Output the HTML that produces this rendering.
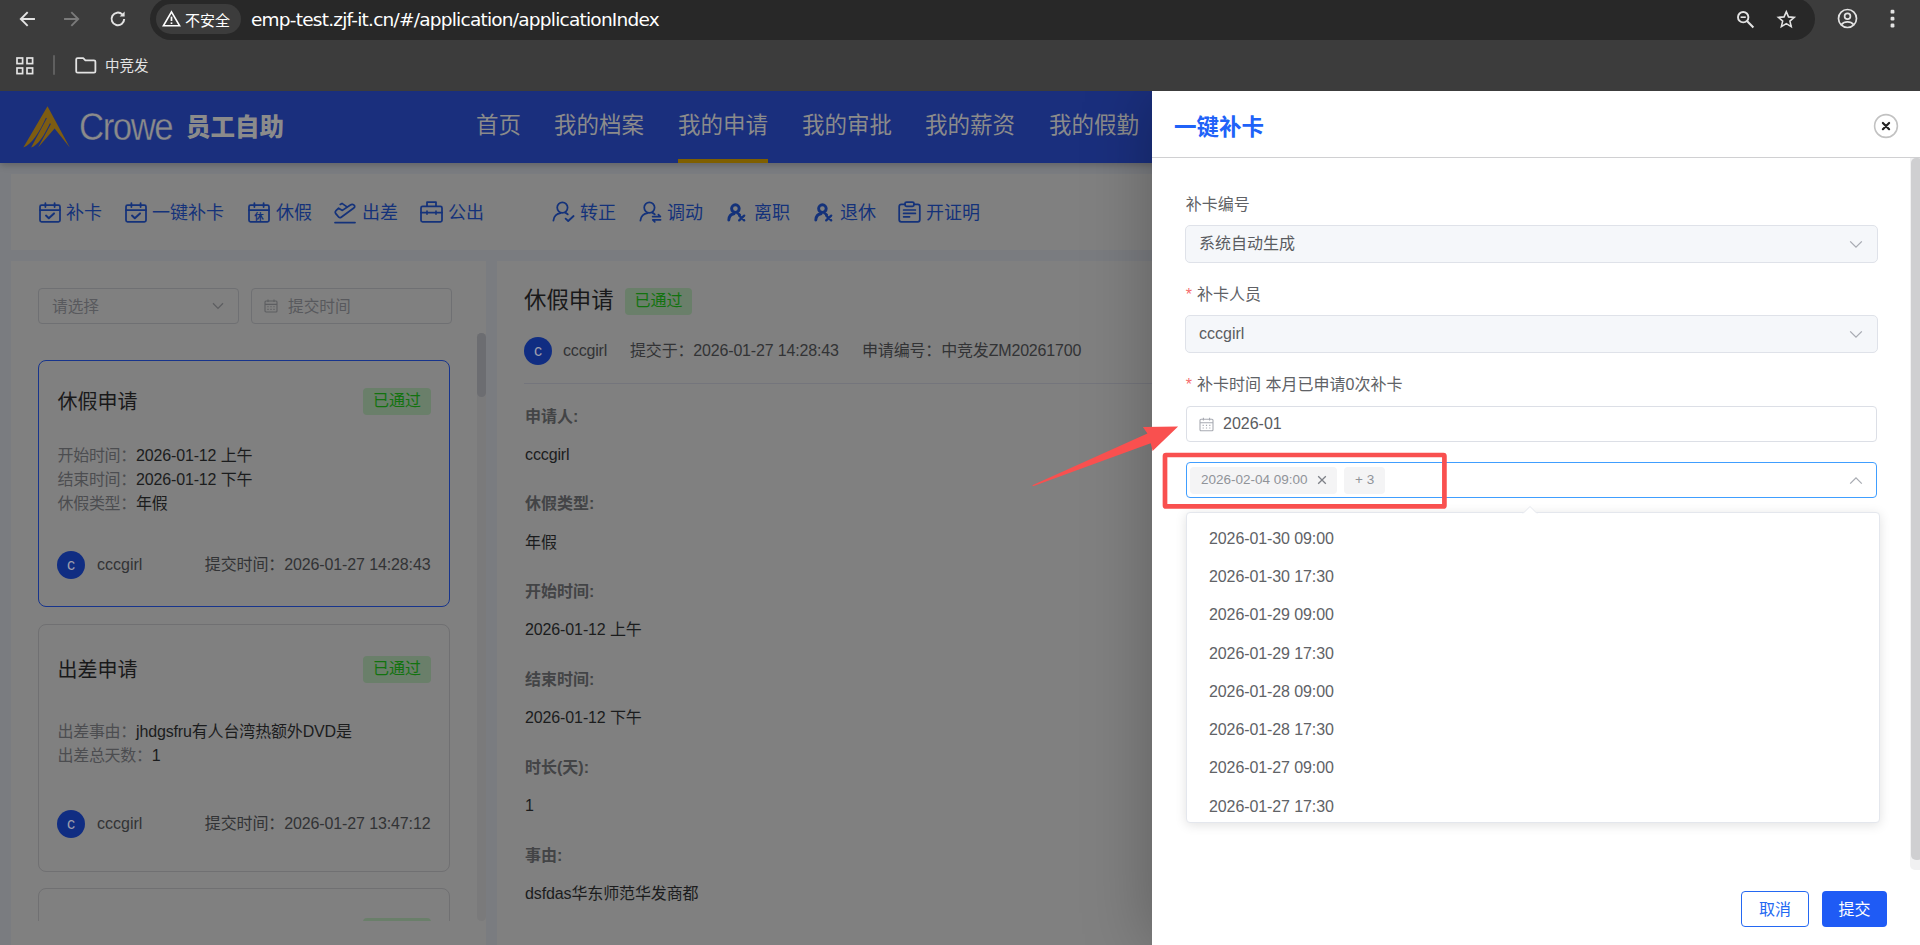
<!DOCTYPE html>
<html lang="zh-CN">
<head>
<meta charset="utf-8">
<title>员工自助</title>
<style>
*{box-sizing:border-box;margin:0;padding:0}
html,body{width:1920px;height:945px;overflow:hidden;background:#fff}
body{font-family:"Liberation Sans","Noto Sans CJK SC",sans-serif;position:relative;color:#303133}
.abs{position:absolute}
/* ---------- browser chrome ---------- */
#chrome{position:absolute;left:0;top:0;width:1920px;height:91px;background:#3c3c3c;z-index:50}
#pill{position:absolute;left:150px;top:-2px;width:1665px;height:42px;border-radius:21px;background:#282828}
#chip{position:absolute;left:156px;top:4px;width:85px;height:30px;border-radius:15px;background:#3c3c3c}
#chip span{position:absolute;left:29px;top:6px;font-size:15px;color:#fff;line-height:22px;white-space:nowrap}
#url{position:absolute;left:251px;top:7px;font-size:18.5px;line-height:26px;color:#fff;white-space:nowrap;font-family:"DejaVu Sans","Liberation Sans",sans-serif;letter-spacing:-0.77px}
#bm{position:absolute;left:105px;top:55px;font-size:14.5px;line-height:22px;color:#e3e3e3;white-space:nowrap}
#chrome svg{position:absolute;overflow:visible}
/* ---------- app page (under mask) ---------- */
#app{position:absolute;left:0;top:91px;width:1920px;height:854px;background:#7a7c80;overflow:hidden}
#hdr{position:absolute;left:0;top:0;width:1920px;height:72px;background:#1a2f7d;box-shadow:0 2px 7px rgba(0,0,0,.22);z-index:2}

#hdr .nav{position:absolute;top:19px;font-size:22.5px;line-height:32px;color:#8b8b8b;white-space:nowrap;letter-spacing:0}
#hdr .ul{position:absolute;left:678px;top:68px;width:90px;height:4px;background:#7f5f00}
#crowe{position:absolute;left:79px;top:13.2px;font-size:38px;line-height:46px;color:#8b8b8b;letter-spacing:-1.6px;transform:scaleX(.915);transform-origin:0 0;font-weight:400;white-space:nowrap;-webkit-text-stroke:0.35px #1a2f7d}
#ygzz{position:absolute;left:186px;top:20px;font-size:24.5px;line-height:34px;color:#8b8b8b;font-weight:900;white-space:nowrap}
#tb{position:absolute;left:11px;top:82.6px;width:1200px;height:76.4px;background:#808080}
.ti{position:absolute;top:109px;font-size:18px;line-height:26px;color:#14327a;white-space:nowrap}
.tic{position:absolute;top:109px;overflow:visible}
#lp{position:absolute;left:11px;top:170px;width:475px;height:700px;background:#808080}
#rp{position:absolute;left:497px;top:170px;width:800px;height:700px;background:#808080}
.inp{position:absolute;top:197px;height:36px;width:201px;border:1px solid #6f7073;border-radius:4px}
.inp span{position:absolute;top:7px;font-size:15.7px;line-height:22px;color:#58595d;white-space:nowrap}
.card{position:absolute;left:38px;width:412px;height:247px;border:1px solid #707072;border-radius:8px}
.card.on{border-color:#17348c}
.card h3{position:absolute;left:18.5px;top:25px;font-size:20px;line-height:30px;font-weight:400;color:#19191a;white-space:nowrap}
.tag{position:absolute;height:27px;width:68px;border-radius:4px;background:#6a7f6a;color:#12730f;font-size:16px;line-height:26px;text-align:center;white-space:nowrap}
.card .r{position:absolute;left:18.5px;font-size:16px;line-height:24px;color:#1b1c1d;white-space:nowrap;letter-spacing:-0.15px}
.card .r i{font-style:normal;color:#4c4d50;letter-spacing:-0.3px}
.av{position:absolute;width:28px;height:28px;border-radius:50%;background:#102d82;color:#9c9cac;font-size:16px;line-height:27px;text-align:center}
.card .nm{position:absolute;left:58px;top:192px;font-size:16px;line-height:24px;color:#323335;white-space:nowrap}
.card .tm{position:absolute;right:18.5px;top:192px;font-size:16px;line-height:24px;color:#323335;white-space:nowrap;letter-spacing:-0.12px}
.dl{position:absolute;left:525px;font-size:16px;line-height:24px;font-weight:700;color:#434446;white-space:nowrap}
.dv{position:absolute;left:525px;font-size:16px;line-height:24px;color:#1b1c1d;white-space:nowrap;letter-spacing:-0.12px}
.meta{position:absolute;top:248px;font-size:16px;line-height:24px;color:#323335;white-space:nowrap;letter-spacing:-0.17px}
/* ---------- drawer ---------- */
#drawer{position:absolute;left:1152px;top:91px;width:768px;height:854px;background:#fff;z-index:20;box-shadow:0 0 64px rgba(0,0,0,.27)}

#drawer .ttl{position:absolute;left:22px;top:20.5px;font-size:22.5px;line-height:32px;font-weight:700;color:#2062f8;white-space:nowrap}
#drawer .hr{position:absolute;left:0;top:66px;width:768px;height:1px;background:#d0d0d2}
.fl{position:absolute;left:33.8px;margin-top:.6px;font-size:16px;line-height:24px;color:#606266;white-space:nowrap}
.fl b{font-weight:400;color:#f56c6c;margin-right:5px}
.sel{position:absolute;left:33px;width:693px;height:38px;border:1px solid #dfe2e9;border-radius:5px;background:#f5f7fa}
.sel span{position:absolute;left:13px;top:6px;font-size:16px;line-height:24px;color:#5a5c61;white-space:nowrap}
.sel svg{position:absolute;left:663px;top:14px}
.opt{position:absolute;left:57px;font-size:16px;line-height:24px;color:#606266;white-space:nowrap;letter-spacing:-0.1px}
.tg{position:absolute;top:4px;height:27px;border-radius:4px;background:#f4f4f5;color:#909399;font-size:13.5px;line-height:26.5px;white-space:nowrap;padding-left:11px}
.btn{position:absolute;top:800px;height:36px;border-radius:4px;font-size:16px;line-height:35.6px;text-align:center;white-space:nowrap}
</style>
</head>
<body>
<div id="chrome">
  <div id="pill"></div>
  <div id="chip"><span>不安全</span></div>
  <div id="url">emp-test.zjf-it.cn/#/application/applicationIndex</div>
  <div id="bm">中竞发</div>

  <!-- back -->
  <svg style="left:19px;top:11px" width="16" height="16" viewBox="0 0 16 16" fill="none" stroke="#e3e3e3" stroke-width="1.9" stroke-linecap="square" stroke-linejoin="miter"><path d="M15 8H2.5M8 1.8L1.8 8L8 14.2"/></svg>
  <!-- forward -->
  <svg style="left:64px;top:11px" width="16" height="16" viewBox="0 0 16 16" fill="none" stroke="#7a7a7a" stroke-width="1.9" stroke-linecap="square"><path d="M1 8H13.5M8 1.8L14.2 8L8 14.2"/></svg>
  <!-- reload -->
  <svg style="left:109px;top:10px" width="18" height="18" viewBox="0 0 18 18" fill="none" stroke="#e3e3e3" stroke-width="2"><path d="M15.2 9A6.3 6.3 0 1 1 13.3 4.4"/><path d="M15.6 1.6V6.6H10.6Z" fill="#e3e3e3" stroke="none"/></svg>
  <!-- warning -->
  <svg style="left:162px;top:10px" width="19" height="17" viewBox="0 0 19 17" fill="none" stroke="#fff" stroke-width="1.6" stroke-linejoin="miter"><path d="M9.5 1.8L17.6 15.8H1.4Z"/><path d="M9.5 6.6V11" stroke-width="1.7"/><path d="M9.5 12.4V14" stroke-width="1.7"/></svg>
  <!-- zoom -->
  <svg style="left:1736px;top:10px" width="19" height="19" viewBox="0 0 19 19" fill="none" stroke="#e3e3e3" stroke-width="1.9"><circle cx="7.2" cy="7.2" r="5.2"/><path d="M11 11L17.4 17.4" stroke-width="2.1"/><path d="M4.6 7.2H9.8" stroke-width="1.6"/></svg>
  <!-- star -->
  <svg style="left:1776.5px;top:9.7px" width="18.6" height="18.6" viewBox="0 0 20 20" fill="none" stroke="#e3e3e3" stroke-width="1.7" stroke-linejoin="miter"><path d="M10 1.8L12.4 7.4L18.5 7.9L13.9 11.9L15.3 17.9L10 14.7L4.7 17.9L6.1 11.9L1.5 7.9L7.6 7.4Z"/></svg>
  <!-- profile -->
  <svg style="left:1837px;top:8px" width="21" height="21" viewBox="0 0 21 21" fill="none" stroke="#e3e3e3" stroke-width="1.7"><circle cx="10.5" cy="10.5" r="9"/><circle cx="10.5" cy="8.3" r="2.9"/><path d="M4.4 16.6C6 14.6 8 13.8 10.5 13.8S15 14.6 16.6 16.6"/></svg>
  <!-- menu -->
  <svg style="left:1890px;top:9px" width="5" height="20" viewBox="0 0 5 20" fill="#e3e3e3"><rect x=".6" y=".8" width="3.8" height="3.8" rx="1.2"/><rect x=".6" y="7.7" width="3.8" height="3.8" rx="1.2"/><rect x=".6" y="14.6" width="3.8" height="3.8" rx="1.2"/></svg>
  <!-- apps grid -->
  <svg style="left:16px;top:57px" width="18" height="18" viewBox="0 0 18 18" fill="none" stroke="#e3e3e3" stroke-width="1.7"><rect x="1" y="1" width="5.6" height="5.6"/><rect x="11" y="1" width="5.6" height="5.6"/><rect x="1" y="11" width="5.6" height="5.6"/><rect x="11" y="11" width="5.6" height="5.6"/></svg>
  <div style="position:absolute;left:53px;top:55px;width:2px;height:20px;background:#5f5f5f;border-radius:1px"></div>
  <!-- folder -->
  <svg style="left:75px;top:57px" width="22" height="17" viewBox="0 0 22 17" fill="none" stroke="#e3e3e3" stroke-width="1.8" stroke-linejoin="round"><path d="M1.2 2.6A1.4 1.4 0 0 1 2.6 1.2H8.2L10.4 3.4H19A1.4 1.4 0 0 1 20.4 4.8V14.2A1.4 1.4 0 0 1 19 15.6H2.6A1.4 1.4 0 0 1 1.2 14.2Z"/></svg>
</div>
<div id="app">
  <div id="hdr">
    <svg style="position:absolute;left:22px;top:13px" width="50" height="46" viewBox="0 0 50 46"><path d="M25.5 2.2L47.8 43.6L32.6 24.4L16.1 43.6L28.9 19.9L27.9 19.2C22 32 16 41 9.1 43.6L24.9 14.2L23.9 13.7C17.5 28 10 40 1.3 43.6Z" fill="#7d5c12"/></svg>
    <div id="crowe">Crowe</div>
    <div id="ygzz">员工自助</div>
    <div class="nav" style="left:476px">首页</div>
    <div class="nav" style="left:554px">我的档案</div>
    <div class="nav" style="left:678px">我的申请</div>
    <div class="nav" style="left:802px">我的审批</div>
    <div class="nav" style="left:925px">我的薪资</div>
    <div class="nav" style="left:1049px">我的假勤</div>
    <div class="ul"></div>
  </div>
  <div id="tb"></div>
  <div class="ti" style="left:66px">补卡</div>
  <div class="ti" style="left:152px">一键补卡</div>
  <div class="ti" style="left:276px">休假</div>
  <div class="ti" style="left:362px">出差</div>
  <div class="ti" style="left:448px">公出</div>
  <div class="ti" style="left:580px">转正</div>
  <div class="ti" style="left:667px">调动</div>
  <div class="ti" style="left:754px">离职</div>
  <div class="ti" style="left:840px">退休</div>
  <div class="ti" style="left:926px">开证明</div>
  <svg class="tic" style="left:38.5px;top:111px" width="22" height="21" viewBox="0 0 22 21" fill="none" stroke="#14327a" stroke-width="1.75" stroke-linecap="round" stroke-linejoin="round"><rect x="1" y="3.2" width="20" height="16.6" rx="1.6"/><path d="M1 8.2H21M6.4 1V5M15.6 1V5"/><path d="M7 13.6L9.8 16.2L15 11.4" stroke-width="2"/></svg>
  <svg class="tic" style="left:124.5px;top:111px" width="22" height="21" viewBox="0 0 22 21" fill="none" stroke="#14327a" stroke-width="1.75" stroke-linecap="round" stroke-linejoin="round"><rect x="1" y="3.2" width="20" height="16.6" rx="1.6"/><path d="M1 8.2H21M6.4 1V5M15.6 1V5"/><path d="M7 13.6L9.8 16.2L15 11.4" stroke-width="2"/></svg>
  <svg class="tic" style="left:247.5px;top:111px" width="22" height="21" viewBox="0 0 22 21" fill="none" stroke="#14327a" stroke-width="1.75" stroke-linecap="round" stroke-linejoin="round"><rect x="1" y="3.2" width="20" height="16.6" rx="1.6"/><path d="M1 8.2H21M6.4 1V5M15.6 1V5"/><text x="11" y="17.6" font-size="9.5" font-weight="700" text-anchor="middle" fill="#14327a" stroke="none" font-family="Liberation Sans,Noto Sans CJK SC,sans-serif">休</text></svg>
  <svg class="tic" style="left:334px;top:110.5px" width="22" height="22" viewBox="0 0 22 22" fill="none" stroke="#14327a" stroke-width="1.75" stroke-linecap="round" stroke-linejoin="round"><path d="M1 20.6H21"/><path d="M2 8.6L4.6 6.2L8.4 8.4L16 3.2C17.6 2.2 19.6 2.4 20.6 3.8C21 4.6 20.6 5.4 19.8 6L7.2 15.2C6.4 15.8 5.4 15.8 4.8 15.2L1.6 11.4C1 10.6 1.2 9.4 2 8.6Z"/><path d="M6.2 2.4L8 1.4L12.6 4.6"/></svg>
  <svg class="tic" style="left:420px;top:110px" width="23" height="22" viewBox="0 0 23 22" fill="none" stroke="#14327a" stroke-width="1.75" stroke-linecap="round" stroke-linejoin="round"><rect x="1" y="5.4" width="21" height="15.4" rx="1.6"/><path d="M7 5.2V1.2H16V5.2"/><path d="M1 11.6H22"/><path d="M7 10V13.2M16 10V13.2" stroke-width="1.6"/></svg>
  <svg class="tic" style="left:551.5px;top:110px" width="23" height="22" viewBox="0 0 23 22" fill="none" stroke="#14327a" stroke-width="1.75" stroke-linecap="round" stroke-linejoin="round"><circle cx="10.4" cy="6.6" r="5.2"/><path d="M1.4 19.6C2 15.4 5 12.6 8.6 12.2"/><path d="M13.2 11.6C14.2 12 15 12.6 15.8 13.4"/><path d="M13.6 17.6L16.2 20L21.6 15" stroke-width="1.8"/></svg>
  <svg class="tic" style="left:638.5px;top:110px" width="23" height="22" viewBox="0 0 23 22" fill="none" stroke="#14327a" stroke-width="1.75" stroke-linecap="round" stroke-linejoin="round"><circle cx="10.4" cy="6.6" r="5.2"/><path d="M1.4 19.6C2 15.4 5 12.6 8.6 12.2"/><path d="M13.2 11.6C14.2 12 15 12.6 15.8 13.4"/><path d="M13.6 15.6H21.4L19.4 13.6M21.6 18.8H13.8L15.8 20.8" stroke-width="1.7"/></svg>
  <svg class="tic" style="left:727px;top:112px" width="19" height="19" viewBox="0 0 19 19" fill="none" stroke="#14327a" stroke-width="2.9" stroke-linecap="round" stroke-linejoin="round"><circle cx="8.4" cy="5.6" r="3.8"/><path d="M1.8 17C2 13.6 4.2 11.2 7 10.8"/><path d="M10.6 10.4C11.6 10.8 12.2 11.2 12.8 11.8" stroke-width="2.4"/><path d="M12.2 12.6L17.2 17.4M17.2 12.6L12.2 17.4" stroke-width="2.3"/></svg>
  <svg class="tic" style="left:814px;top:112px" width="19" height="19" viewBox="0 0 19 19" fill="none" stroke="#14327a" stroke-width="2.9" stroke-linecap="round" stroke-linejoin="round"><circle cx="8.4" cy="5.6" r="3.8"/><path d="M1.8 17C2 13.6 4.2 11.2 7 10.8"/><path d="M10.6 10.4C11.6 10.8 12.2 11.2 12.8 11.8" stroke-width="2.4"/><path d="M12.2 12.6L17.2 17.4M17.2 12.6L12.2 17.4" stroke-width="2.3"/></svg>
  <svg class="tic" style="left:898px;top:110px" width="23" height="22" viewBox="0 0 23 22" fill="none" stroke="#14327a" stroke-width="1.75" stroke-linecap="round" stroke-linejoin="round"><path d="M7 3.4H3.2A2 2 0 0 0 1.2 5.4V18.8A2 2 0 0 0 3.2 20.8H19.8A2 2 0 0 0 21.8 18.8V5.4A2 2 0 0 0 19.8 3.4H16"/><rect x="7" y="1" width="9" height="4.4" rx="1.6"/><path d="M5.6 9H17.4M5.6 12.4H17.4M5.6 15.8H11.6" stroke-width="1.7"/></svg>
  <div id="lp"></div>
  <div id="rp"></div>
  <div class="inp" style="left:38px"><span style="left:13px">请选择</span>
    <svg style="position:absolute;left:173px;top:13px" width="12" height="8" viewBox="0 0 12 8" fill="none" stroke="#5d5e61" stroke-width="1.3"><path d="M1 1.2L6 6.4L11 1.2"/></svg></div>
  <div class="inp" style="left:251px"><span style="left:36px">提交时间</span>
    <svg style="position:absolute;left:12px;top:10px" width="14" height="14" viewBox="0 0 14 14" fill="none" stroke="#5d5e61" stroke-width="1.1"><rect x="1" y="2" width="12" height="11" rx="1"/><path d="M1 5.4H13M4 .6V3M10 .6V3"/><path d="M3.4 7.8H4.6M6.4 7.8H7.6M9.4 7.8H10.6M3.4 10.4H4.6M6.4 10.4H7.6M9.4 10.4H10.6"/></svg></div>
  <div style="position:absolute;left:477px;top:242px;width:9px;height:588px;background:#7a7a7b;border-radius:4.5px"></div>
  <div style="position:absolute;left:477px;top:242px;width:9px;height:64px;background:#6c6d71;border-radius:4.5px"></div>
  <div id="list" style="position:absolute;left:0;top:260px;width:476px;height:569.5px;overflow:hidden">
  <div class="card on" style="top:9px">
    <h3 style="top:26px">休假申请</h3><div class="tag" style="left:324px;top:27px">已通过</div>
    <div class="r" style="top:83px"><i>开始时间：</i>2026-01-12 上午</div>
    <div class="r" style="top:107px"><i>结束时间：</i>2026-01-12 下午</div>
    <div class="r" style="top:131px"><i>休假类型：</i>年假</div>
    <div class="av" style="left:18px;top:190px">c</div><div class="nm">cccgirl</div><div class="tm">提交时间：2026-01-27 14:28:43</div>
  </div>
  <div class="card" style="top:272.5px;height:248px">
    <h3 style="top:30px">出差申请</h3><div class="tag" style="left:324px;top:31.5px">已通过</div>
    <div class="r" style="top:95px"><i>出差事由：</i>jhdgsfru有人台湾热额外DVD是</div>
    <div class="r" style="top:119px"><i>出差总天数：</i>1</div>
    <div class="av" style="left:18px;top:185.5px">c</div><div class="nm" style="top:187.5px">cccgirl</div><div class="tm" style="top:187.5px">提交时间：2026-01-27 13:47:12</div>
  </div>
  <div class="card" style="top:536.5px">
    <h3 style="top:28.5px">休假申请</h3><div class="tag" style="left:324px;top:29px">已通过</div>
  </div>
  </div>
  <div style="position:absolute;left:524px;top:193.8px;font-size:22.4px;line-height:32px;color:#19191a;white-space:nowrap">休假申请</div>
  <div class="tag" style="left:625px;top:197px;width:67px;height:26.5px">已通过</div>
  <div class="av" style="left:524px;top:246px">c</div>
  <div class="meta" style="left:563px">cccgirl</div>
  <div class="meta" style="left:630px">提交于：2026-01-27 14:28:43</div>
  <div class="meta" style="left:862px">申请编号：中竞发ZM20261700</div>
  <div style="position:absolute;left:524px;top:292px;width:700px;height:1px;background:#74757c"></div>
  <div class="dl" style="top:314.2px">申请人:</div><div class="dv" style="top:352.2px">cccgirl</div>
  <div class="dl" style="top:401.2px">休假类型:</div><div class="dv" style="top:440.2px">年假</div>
  <div class="dl" style="top:489.2px">开始时间:</div><div class="dv" style="top:527.2px">2026-01-12 上午</div>
  <div class="dl" style="top:577.2px">结束时间:</div><div class="dv" style="top:615.2px">2026-01-12 下午</div>
  <div class="dl" style="top:665.2px">时长(天):</div><div class="dv" style="top:703.2px">1</div>
  <div class="dl" style="top:753.2px">事由:</div><div class="dv" style="top:791.2px">dsfdas华东师范华发商都</div>
</div>
<div id="drawer">
  <div class="ttl">一键补卡</div>
  <svg style="position:absolute;left:721px;top:22px" width="26" height="26" viewBox="0 0 26 26" fill="none"><circle cx="13" cy="13" r="11.4" stroke="#c2c2c2" stroke-width="1.6"/><path d="M9.9 10L16.1 16.2M16.1 10L9.9 16.2" stroke="#222" stroke-width="2.2" stroke-linecap="round"/></svg>
  <div class="hr"></div>
  <div style="position:absolute;left:758px;top:67px;width:14px;height:712px;background:#f1f1f2;border-radius:0 0 5px 5px"></div>
  <div style="position:absolute;left:759px;top:67px;width:12px;height:702px;background:#cfcfd1;border-radius:5px"></div>
  <div class="fl" style="top:101px">补卡编号</div>
  <div class="sel" style="top:134px"><span>系统自动生成</span><svg width="14" height="9" viewBox="0 0 14 9" fill="none" stroke="#a8abb2" stroke-width="1.3"><path d="M1.2 1.4L7 7.2L12.8 1.4"/></svg></div>
  <div class="fl" style="top:191px"><b>*</b>补卡人员</div>
  <div class="sel" style="top:224px"><span>cccgirl</span><svg width="14" height="9" viewBox="0 0 14 9" fill="none" stroke="#a8abb2" stroke-width="1.3"><path d="M1.2 1.4L7 7.2L12.8 1.4"/></svg></div>
  <div class="fl" style="top:281px"><b>*</b>补卡时间 本月已申请0次补卡</div>
  <div style="position:absolute;left:34px;top:315px;width:691px;height:36px;border:1px solid #dcdfe6;border-radius:4px;background:#fff">
    <svg style="position:absolute;left:12px;top:10px" width="15" height="15" viewBox="0 0 15 15" fill="none" stroke="#a8abb2" stroke-width="1.1"><rect x="1" y="2.2" width="13" height="11.6" rx="1"/><path d="M1 5.8H14M4.4 .8V3.4M10.6 .8V3.4"/><path d="M3.6 8.4H4.8M6.9 8.4H8.1M10.2 8.4H11.4M3.6 11H4.8M6.9 11H8.1M10.2 11H11.4"/></svg>
    <span style="position:absolute;left:36px;top:5px;font-size:16px;line-height:24px;color:#5a5c61;white-space:nowrap">2026-01</span>
  </div>
  <div style="position:absolute;left:34px;top:371px;width:691px;height:36px;border:1px solid #409eff;border-radius:4px;background:#fff">
    <div class="tg" style="left:3px;width:147px">2026-02-04 09:00<svg style="position:absolute;left:127px;top:8px" width="10" height="10" viewBox="0 0 10 10" fill="none" stroke="#7d8087" stroke-width="1.3"><path d="M1.2 1.2L8.8 8.8M8.8 1.2L1.2 8.8"/></svg></div>
    <div class="tg" style="left:157px;width:41px">+ 3</div>
    <svg style="position:absolute;left:662px;top:13px" width="14" height="9" viewBox="0 0 14 9" fill="none" stroke="#a8abb2" stroke-width="1.3"><path d="M1.2 7.6L7 1.8L12.8 7.6"/></svg>
  </div>
  <!-- dropdown -->
  <div style="position:absolute;left:34px;top:421.3px;width:694px;height:310.7px;background:#fff;border:1px solid #e4e7ed;border-radius:4px;box-shadow:0 2px 12px rgba(0,0,0,.12);overflow:hidden">
  </div>
  <svg style="position:absolute;left:370px;top:414.3px" width="16" height="9" viewBox="0 0 16 9"><path d="M1 8.5L8 1.5L15 8.5" fill="#fff" stroke="#e4e7ed" stroke-width="1"/><path d="M1.5 8.6H14.5" stroke="#fff" stroke-width="1.6"/></svg>
  <div class="opt" style="top:436px">2026-01-30 09:00</div>
  <div class="opt" style="top:474px">2026-01-30 17:30</div>
  <div class="opt" style="top:512px">2026-01-29 09:00</div>
  <div class="opt" style="top:551px">2026-01-29 17:30</div>
  <div class="opt" style="top:589px">2026-01-28 09:00</div>
  <div class="opt" style="top:627px">2026-01-28 17:30</div>
  <div class="opt" style="top:665px">2026-01-27 09:00</div>
  <div class="opt" style="top:704px">2026-01-27 17:30</div>
  <div class="btn" style="left:589px;width:68px;border:1px solid #2468f2;color:#2468f2;background:#fff">取消</div>
  <div class="btn" style="left:670px;width:65px;background:#1f5bf5;color:#fff;line-height:37.6px">提交</div>
</div>
<svg style="position:absolute;left:0;top:0;z-index:40;overflow:visible" width="1920" height="945" viewBox="0 0 1920 945"><rect x="1165" y="455" width="279.4" height="51.4" fill="none" stroke="#f9504f" stroke-width="4.7" rx="1"/><path d="M1032.4 485.2L1147.4 433.6L1142.9 427.1L1178.1 426.4L1152.6 451L1150.7 443.3L1033 486.2Z" fill="#f9504f"/></svg>
</body>
</html>
